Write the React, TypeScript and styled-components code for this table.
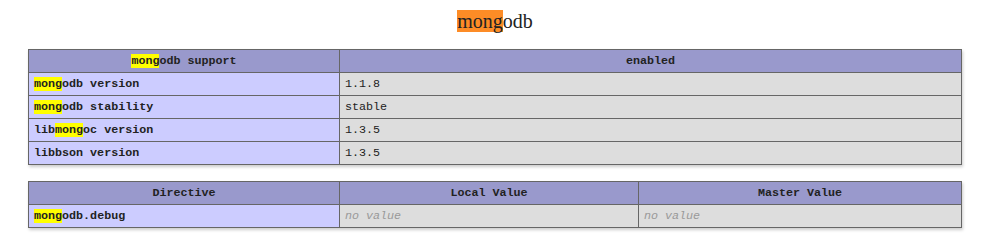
import React from 'react';
import styled, { createGlobalStyle } from 'styled-components';

const GlobalStyle = createGlobalStyle`
  html, body {
    margin: 0;
    padding: 0;
    background: #fff;
  }
  body {
    font-family: "Liberation Mono", "DejaVu Sans Mono", monospace;
    color: #222;
  }
`;

const Page = styled.div`
  width: 982px;
  padding: 11px 0 0 28px;
  box-sizing: border-box;
`;

const Title = styled.h2`
  margin: 0 0 17px;
  width: 934px;
  text-align: center;
  font-family: "Liberation Serif", "Times New Roman", serif;
  font-size: 20px;
  font-weight: normal;
  line-height: 21px;
  color: #222;
`;

const Mark = styled.span<{ $tone?: 'orange' | 'yellow' }>`
  background: ${p => (p.$tone === 'orange' ? '#fd8c26' : '#ffff00')};
`;

const Table = styled.table`
  border-collapse: collapse;
  width: 934px;
  box-shadow: 1px 2px 3px #ccc;
  margin-bottom: 16px;
  table-layout: fixed;
`;

const Head = styled.th`
  background: #9999cc;
  border: 1px solid #666;
  height: 22px;
  padding: 0 5px;
  font-size: 11.7px;
  font-weight: bold;
  text-align: center;
  color: #222;
`;

const Label = styled.td`
  background: #ccccff;
  border: 1px solid #666;
  height: 22px;
  padding: 0 5px;
  font-size: 11.7px;
  font-weight: bold;
  color: #222;
  box-sizing: border-box;
`;

const Value = styled.td<{ $empty?: boolean }>`
  background: #dddddd;
  border: 1px solid #666;
  height: 22px;
  padding: 0 5px;
  font-size: 11.7px;
  color: ${p => (p.$empty ? '#999' : '#222')};
  font-style: ${p => (p.$empty ? 'italic' : 'normal')};
`;

const hl = (pre: string, mark: string, post: string) => (
  <>
    {pre}
    <Mark>{mark}</Mark>
    {post}
  </>
);

const info = [
  { name: hl('', 'mong', 'odb version'), value: '1.1.8' },
  { name: hl('', 'mong', 'odb stability'), value: 'stable' },
  { name: hl('lib', 'mong', 'oc version'), value: '1.3.5' },
  { name: hl('', '', 'libbson version'), value: '1.3.5' },
];

export default function App() {
  return (
    <Page>
      <GlobalStyle />
      <Title>
        <Mark $tone="orange">mong</Mark>odb
      </Title>
      <Table>
        <colgroup>
          <col style={{ width: 311 }} />
          <col />
        </colgroup>
        <thead>
          <tr>
            <Head>{hl('', 'mong', 'odb support')}</Head>
            <Head>enabled</Head>
          </tr>
        </thead>
        <tbody>
          {info.map((row, i) => (
            <tr key={i}>
              <Label>{row.name}</Label>
              <Value>{row.value}</Value>
            </tr>
          ))}
        </tbody>
      </Table>
      <Table>
        <colgroup>
          <col style={{ width: 311 }} />
          <col style={{ width: 299 }} />
          <col />
        </colgroup>
        <thead>
          <tr>
            <Head>Directive</Head>
            <Head>Local Value</Head>
            <Head>Master Value</Head>
          </tr>
        </thead>
        <tbody>
          <tr>
            <Label>{hl('', 'mong', 'odb.debug')}</Label>
            <Value $empty>no value</Value>
            <Value $empty>no value</Value>
          </tr>
        </tbody>
      </Table>
    </Page>
  );
}
